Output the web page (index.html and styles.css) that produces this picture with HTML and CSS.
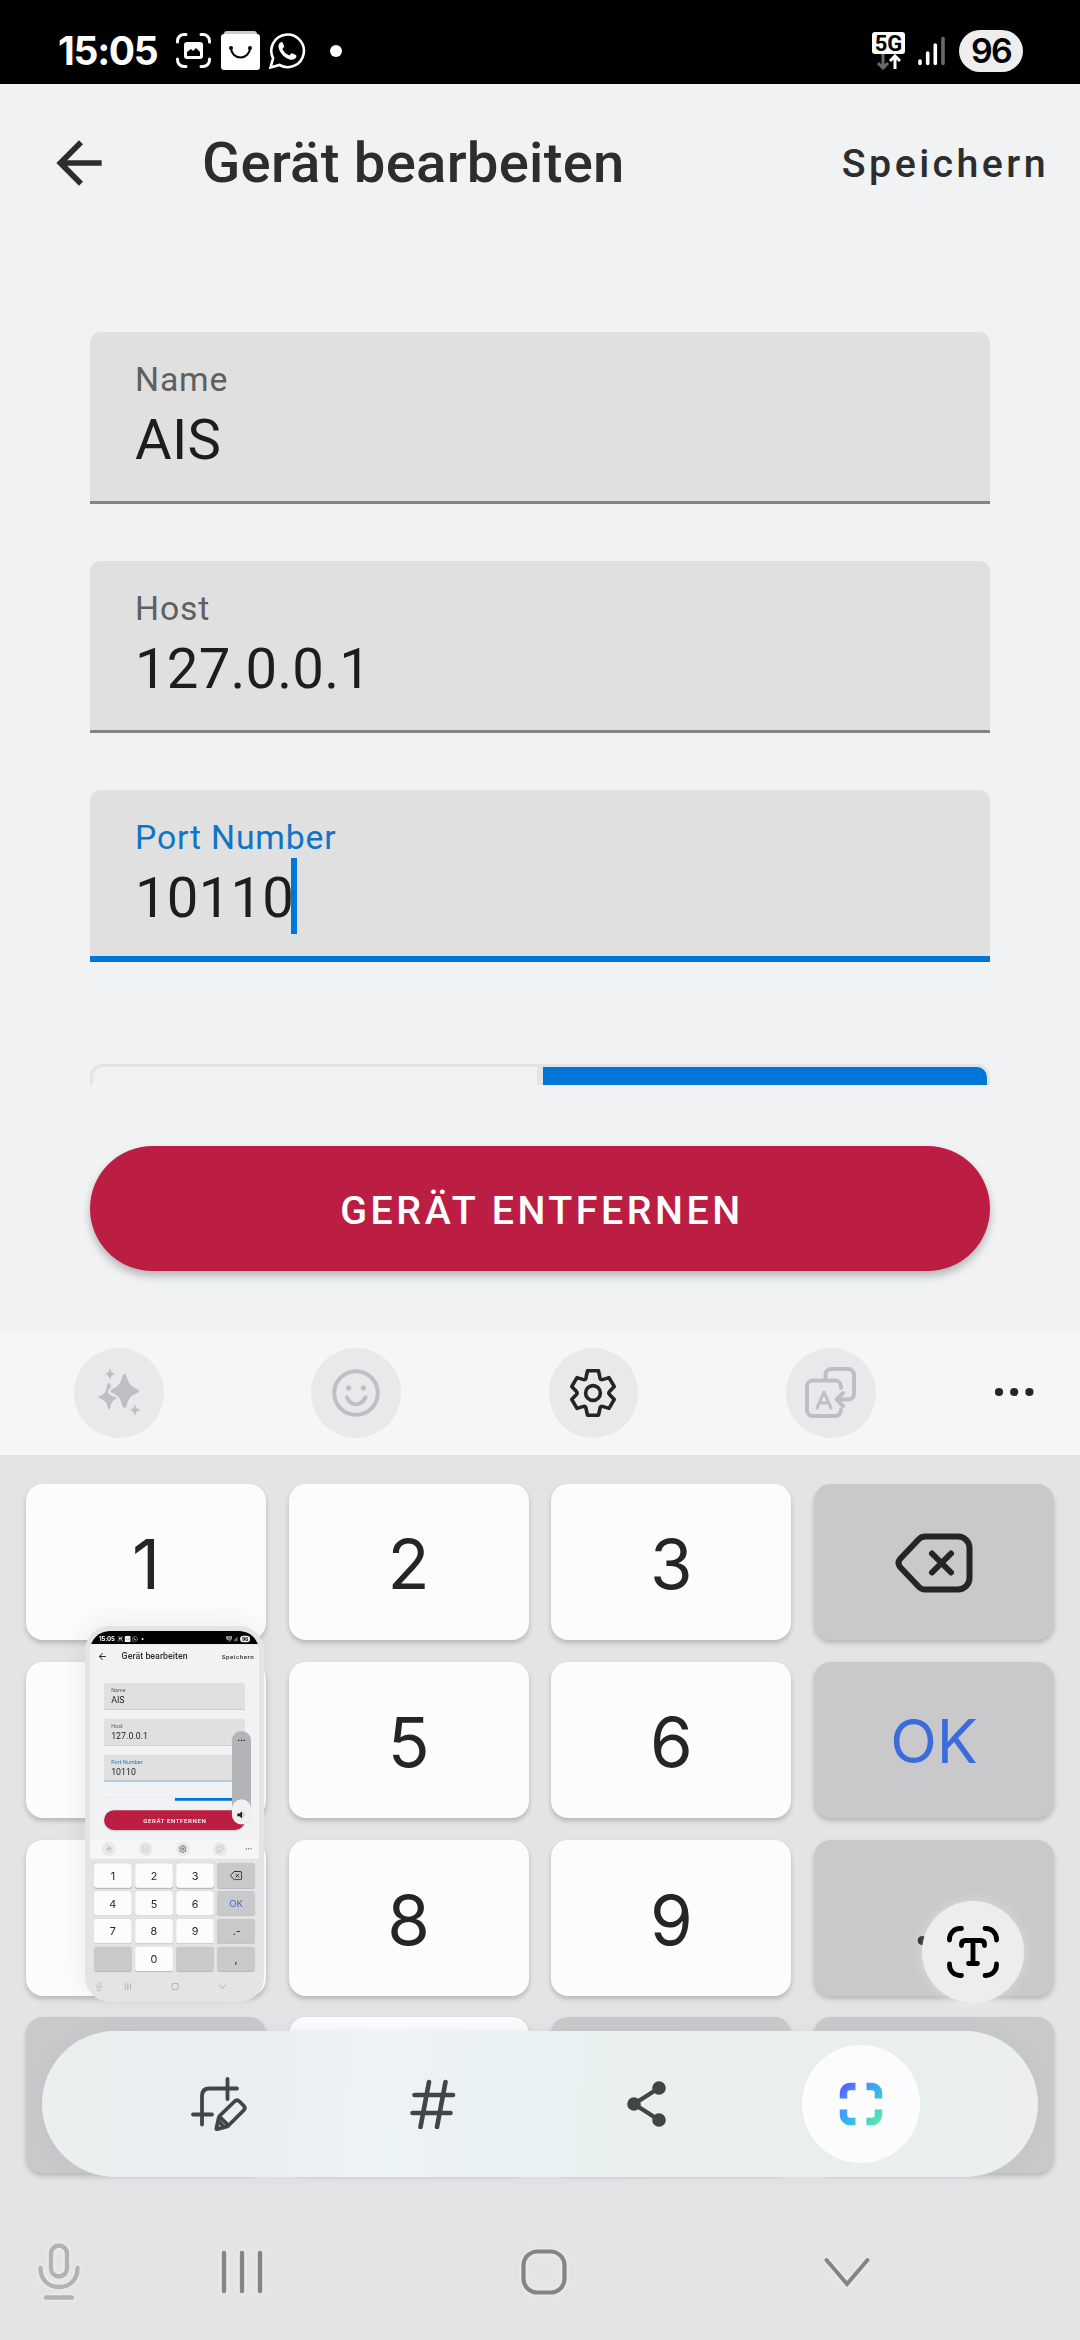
FILE: index.html
```html
<!DOCTYPE html>
<html lang="de">
<head>
    <meta charset="UTF-8">
    <meta name="viewport" content="width=device-width, initial-scale=1.0">
    <title>Gerät bearbeiten</title>
    <link rel="stylesheet" href="styles.css">
</head>
<body>
    <div class="screen" id="screen">
        <div class="statusbar">
            <span class="clock">15:05</span>
            <svg class="st-capture" width="35" height="35" viewBox="0 0 35 35">
                <path d="M1.500 9V8a6.500 6.500 0 0 1 6.500-6.500h2M25 1.500h2A6.500 6.500 0 0 1 33.500 8v1M33.500 26v1a6.500 6.500 0 0 1-6.500 6.500h-2M10 33.500H8A6.500 6.500 0 0 1 1.500 27v-1" fill="none" stroke="#fff" stroke-width="3" stroke-linecap="round"/>
                <rect x="8" y="9" width="19" height="17" rx="3" fill="#fff"/>
                <path d="M11 23v-4l4-3 2 2 3-3 4 4v4z" fill="#000"/>
            </svg>
            <svg class="st-bag" width="39" height="39" viewBox="0 0 39 39">
                <path d="M3 3a3 3 0 0 1 3-3h27a3 3 0 0 1 3 3v3H3z" fill="#ccc"/>
                <rect y="3" width="39" height="36" rx="3" fill="#fff"/>
                <path d="M10 17a9.500 9.500 0 0 0 19 0" fill="none" stroke="#000" stroke-width="2"/>
                <circle cx="10" cy="17" r="2" fill="#000"/>
                <circle cx="29" cy="17" r="2" fill="#000"/>
            </svg>
            <svg class="st-whatsapp" width="37" height="37" viewBox="0 0 37 37">
                <path d="M1.500 35.500l2.600-9.200A16.300 16.300 0 1 1 10.500 33z" fill="none" stroke="#fff" stroke-width="2.600"/>
                <path d="M12.500 10c-2 .6-3.300 2.500-3 5 .8 6 6.500 11.500 12 12.700 3 .6 5.500-1 5.900-3.200.1-.8 0-1.200-.6-1.500l-3.600-1.700c-.6-.2-1 0-1.300.4l-1.500 1.800c-3.300-1.300-5.600-3.500-7-6.500l1.500-2c.3-.4.3-.7.1-1.200l-1.500-3.400c-.2-.5-.5-.5-1-.4z" fill="#fff"/>
            </svg>
            <span class="st-dot"></span>
            <div class="st-right">
                <div class="net">
                    <span class="net-label">5G</span>
                    <svg width="26" height="16" viewBox="0 0 26 16" fill="none" stroke-width="3">
                        <path d="M7 0v14M2 9l5 5 5-5" stroke="#6a6a6a"/>
                        <path d="M19 15V2M14 7l5-5 5 5" stroke="#fff"/>
                    </svg>
                </div>
                <svg class="signal" width="27" height="30" viewBox="0 0 27 30" fill="none" stroke-width="3.600" stroke-linecap="round">
                    <path d="M2 25v2.500M9.700 17v10.500M17.300 9v18.500" stroke="#fff"/>
                    <path d="M25 2.500v25" stroke="#6a6a6a"/>
                </svg>
                <span class="battery">96</span>
            </div>
        </div>

        <div class="app">
            <div class="header">
                <svg class="back" width="68" height="68" viewBox="0 0 24 24">
                    <path d="M20 11H7.830l5.590-5.590L12 4l-8 8 8 8 1.410-1.410L7.830 13H20v-2z" fill="#2d2d2d"/>
                </svg>
                <h1>Gerät bearbeiten</h1>
                <span class="save">Speichern</span>
            </div>

            <div class="form">
                <div class="field">
                    <div class="label">Name</div>
                    <div class="value">AIS</div>
                </div>
                <div class="field">
                    <div class="label">Host</div>
                    <div class="value">127.0.0.1</div>
                </div>
                <div class="field active">
                    <div class="label">Port Number</div>
                    <div class="value">10110<span class="caret"></span></div>
                </div>
                <div class="toggle">
                    <div class="toggle-off"></div>
                    <div class="toggle-on"></div>
                </div>
            </div>

            <div class="remove">GERÄT ENTFERNEN</div>
        </div>

        <div class="tools">
            <div class="tool">
                <svg width="44" height="50" viewBox="0 0 44 50" fill="#bfbfc3">
                    <path d="M27.500 6c1.200 0 1.600 1 2.200 2.700 1.800 5.800 2.800 9 11 12.600 1.800.8 1.800 2.600 0 3.400-8 3.200-9.300 6.500-11 12.600-.6 1.800-1 2.700-2.200 2.700s-1.600-1-2.200-2.700c-1.700-6-3-9.400-10.300-12.600-1.800-.8-1.800-2.600 0-3.400C22.500 18 23.500 14.500 25.300 8.700 25.900 7 26.300 6 27.500 6z"/>
                    <path d="M12 15c.8 0 1.200.8 1.600 2l.6 2c-3.700 2-4 6.600-.7 8.300l5.500 2.200c.8.300.8 1 0 1.300-4 1.700-4.600 4.500-5.600 8.500-.7 2.700-2 2.700-2.700 0-1-4-2-7-8.200-9-1.300-.5-1.300-1.500 0-2 5.800-2.300 6.500-5.500 7.800-11.300.4-1.400.9-2 1.700-2z"/>
                    <path d="M13 0c1 4 1.700 4.800 5 6-3.300 1.200-4 2-5 6-1-4-1.700-4.800-5-6 3.300-1.200 4-2 5-6zM38 36c1 4 1.700 4.800 5.500 6-3.800 1.200-4.500 2-5.500 6-1-4-1.700-4.800-5-6 3.300-1.200 4-2 5-6z"/>
                </svg>
            </div>
            <div class="tool">
                <svg width="48" height="48" viewBox="0 0 48 48" fill="none" stroke="#bfbfc3" stroke-width="4">
                    <circle cx="24" cy="24" r="21.800"/>
                    <path d="M15 28.500c4 9 14 9 18.500 0" stroke-linecap="round"/>
                    <circle cx="16.500" cy="19" r="2.600" fill="#bfbfc3" stroke="none"/>
                    <circle cx="31.500" cy="19" r="2.600" fill="#bfbfc3" stroke="none"/>
                </svg>
            </div>
            <div class="tool">
                <svg width="48" height="48" viewBox="0 0 48 48" fill="none" stroke="#252528" stroke-width="3.600" stroke-linejoin="round">
                    <path d="M18.500 1.800h11l1.600 7.400c.3 1.200 1.200 1.700 2.300 1.400l6.600-2 5.300 9-4.800 5c-.8.900-.8 1.900 0 2.800l4.800 5-5.300 9-6.600-2c-1.100-.3-2 .2-2.300 1.400l-1.600 7.400h-11l-1.600-7.400c-.3-1.200-1.200-1.700-2.300-1.400l-6.600 2-5.300-9 4.800-5c.8-.9.8-1.900 0-2.800l-4.800-5 5.300-9 6.600 2c1.100.3 2-.2 2.300-1.400z"/>
                    <circle cx="24" cy="24" r="7.400"/>
                </svg>
            </div>
            <div class="tool">
                <svg width="52" height="52" viewBox="0 0 52 52" fill="none" stroke="#bfbfc3" stroke-width="4" stroke-linecap="round" stroke-linejoin="round">
                    <path d="M20.500 13V8a6 6 0 0 1 6-6H43a6 6 0 0 1 6 6v18.500a6 6 0 0 1-6 6h-9M38 26l-6.500 6.500L38 39"/>
                    <path d="M36 21v-1.500a6 6 0 0 0-6-6H8a6 6 0 0 0-6 6V43a6 6 0 0 0 6 6h22a6 6 0 0 0 6-6v-.500"/>
                    <path d="M12 41l7-16 7 16M14.500 36h9" stroke-width="3"/>
                </svg>
            </div>
            <svg class="more" width="40" height="10" viewBox="0 0 40 10" fill="#252528">
                <circle cx="5" cy="5" r="4.100"/>
                <circle cx="20.200" cy="5" r="4.100"/>
                <circle cx="35.400" cy="5" r="4.100"/>
            </svg>
        </div>

        <div class="keyboard">
            <div class="keys">
                <div class="key">1</div>
                <div class="key">2</div>
                <div class="key">3</div>
                <div class="key dark">
                    <svg class="del" width="78" height="60" viewBox="0 0 78 60" fill="none" stroke="#252528" stroke-width="6" stroke-linecap="round" stroke-linejoin="round">
                        <path d="M30 3.500h33A11.500 11.500 0 0 1 74.500 15v30A11.500 11.500 0 0 1 63 56.500H30q-3.500 0-6-2.500L5.500 34.500q-4-4.500 0-9L24 6q2.500-2.500 6-2.500z"/>
                        <path d="M37 20.500l19 19M56 20.500l-19 19"/>
                    </svg>
                </div>
                <div class="key"><span class="covered">4</span></div>
                <div class="key">5</div>
                <div class="key">6</div>
                <div class="key dark ok">OK</div>
                <div class="key"><span class="covered">7</span></div>
                <div class="key">8</div>
                <div class="key">9</div>
                <div class="key dark punct">.-</div>
                <div class="key dark"></div>
                <div class="key"><span class="covered">0</span></div>
                <div class="key dark"></div>
                <div class="key dark"><span class="covered">,</span></div>
            </div>
            <div class="nav">
                <svg class="nav-mic" width="42" height="58" viewBox="0 0 42 58" fill="none" stroke="#b2b2b4" stroke-width="4.400" stroke-linecap="round">
                    <rect x="13" y="2.500" width="16" height="31" rx="8"/>
                    <path d="M2.500 25c0 12 8 19 18.500 19s18.500-7 18.500-19M8 54.500h26"/>
                </svg>
                <svg class="nav-recents" width="42" height="44" viewBox="0 0 42 44" stroke="#848486" stroke-width="4.400" stroke-linecap="round">
                    <path d="M3 3v38M21 3v38M39 3v38"/>
                </svg>
                <svg class="nav-home" width="46" height="46" viewBox="0 0 46 46" fill="none" stroke="#848486" stroke-width="4.200">
                    <rect x="2.500" y="2.500" width="41" height="41" rx="14"/>
                </svg>
                <svg class="nav-down" width="46" height="30" viewBox="0 0 46 30" fill="none" stroke="#848486" stroke-width="4" stroke-linecap="round">
                    <path d="M2.500 3L23 27 43.500 3"/>
                </svg>
            </div>
        </div>
    </div>

    <!-- preview of the captured screen, filled by script.js -->
    <div class="preview">
        <div class="preview-inner">
            <div class="preview-page" id="preview">
                <div class="volume">
                    <svg width="48" height="12" viewBox="0 0 48 12" fill="#222"><circle cx="6" cy="6" r="5"/><circle cx="24" cy="6" r="5"/><circle cx="42" cy="6" r="5"/></svg>
                    <div class="volume-knob">
                        <svg width="60" height="54" viewBox="0 0 60 54"><path d="M3 18h14L34 4v46L17 36H3z" fill="#222"/><path d="M42 16q10 11 0 22" fill="none" stroke="#999" stroke-width="5"/></svg>
                    </div>
                </div>
            </div>
        </div>
    </div>

    <div class="text-scan">
        <svg width="52" height="52" viewBox="0 0 52 52" fill="none" stroke="#000" stroke-width="4.800" stroke-linecap="round">
            <path d="M2.500 14v-1A10.500 10.500 0 0 1 13 2.500h1.500M38 2.500h1A10.500 10.500 0 0 1 49.500 13v1M49.500 38v1A10.500 10.500 0 0 1 39 49.500h-1M14.500 49.500H13A10.500 10.500 0 0 1 2.500 39v-1"/>
            <path d="M14.500 19.500v-1q0-4 4-4h15q4 0 4 4v1M26 14.500v23M21.500 37.500h9"/>
        </svg>
    </div>

    <div class="actions">
        <div class="action">
            <svg width="56" height="54" viewBox="0 0 56 54" fill="none" stroke="#444" stroke-width="3.800" stroke-linecap="round" stroke-linejoin="round">
                <path d="M46 11.500H18.500q-7.500 0-7.500 7.500v28.500M2 37.500h19M36.500 2v20"/>
                <path d="M43.500 24.500q2.500-2.500 5 0l4 4q2.500 2.500 0 5L38 48q-1 1.200-2.500 1.600l-9.500 2.600q-.8.200-.6-.7l2.300-10.500q.3-1.400 1.300-2.500zM29 40l8.500 8.500M28 44.500l5 5.500"/>
            </svg>
        </div>
        <div class="action">
            <svg width="46" height="50" viewBox="0 0 46 50" fill="none" stroke="#444" stroke-width="4.600" stroke-linecap="round">
                <path d="M4.500 16H43M2.500 34H40.500M19 3l-8.500 45M35.500 3L27 48"/>
            </svg>
        </div>
        <div class="action">
            <svg width="40" height="46" viewBox="0 0 40 46" fill="#444" stroke="#444" stroke-width="4.400">
                <path d="M32 7L7 23l25 16" fill="none"/>
                <circle cx="32" cy="7" r="4.600"/>
                <circle cx="7" cy="23" r="4.600"/>
                <circle cx="32" cy="39" r="4.600"/>
            </svg>
        </div>
        <div class="action selected">
            <svg width="44" height="44" viewBox="0 0 44 44" fill="none" stroke-width="7.500">
                <defs>
                    <linearGradient id="scan" gradientUnits="userSpaceOnUse" x1="2" y1="2" x2="42" y2="42">
                        <stop offset="0" stop-color="#5b55f0"/>
                        <stop offset=".25" stop-color="#4b8bff"/>
                        <stop offset=".55" stop-color="#35b4f0"/>
                        <stop offset="1" stop-color="#5bf0a0"/>
                    </linearGradient>
                </defs>
                <path d="M4.500 16.500V11a6.500 6.500 0 0 1 6.500-6.500h5.500M27.500 4.500H33a6.500 6.500 0 0 1 6.500 6.500v5.500M39.500 27.500V33a6.500 6.500 0 0 1-6.500 6.500h-5.500M16.500 39.500H11A6.500 6.500 0 0 1 4.500 33v-5.500" stroke="url(#scan)"/>
            </svg>
        </div>
    </div>

    <script src="script.js"></script>
</body>
</html>
```

FILE: styles.css
```css
* {
    box-sizing: border-box;
}
body {
    position: relative;
    margin: 0;
    width: 1080px;
    height: 2340px;
    overflow: hidden;
    font-family: Roboto, "Noto Sans", sans-serif;
    background-color: #e4e4e6;
}
svg {
    display: block;
    flex: none;
}
.screen {
    display: flex;
    flex-direction: column;
    width: 1080px;
    height: 2340px;
    background-color: #e4e4e6;
}

/* status bar */
.statusbar {
    display: flex;
    align-items: center;
    height: 84px;
    padding: 17px 57px 0 58px;
    background-color: #000;
    color: #fff;
}
.clock {
    width: 118px;
    font-family: Inter, sans-serif;
    font-size: 39px;
    font-weight: 700;
    line-height: 44px;
    letter-spacing: -1.3px;
}
.st-bag {
    margin-left: 10px;
}
.st-whatsapp {
    margin-left: 9px;
}
.st-dot {
    width: 12px;
    height: 12px;
    margin-left: 24px;
    border-radius: 50%;
    background-color: #fff;
}
.st-right {
    display: flex;
    align-items: center;
    margin-left: auto;
}
.net {
    display: flex;
    flex-direction: column;
    align-items: center;
    width: 33px;
    height: 38px;
}
.net-label {
    width: 33px;
    height: 22px;
    border-radius: 3px;
    background-color: #fff;
    color: #000;
    font-size: 22px;
    font-weight: 700;
    line-height: 23px;
    text-align: center;
}
.signal {
    margin-left: 13px;
}
.battery {
    width: 64px;
    height: 42px;
    margin-left: 14px;
    border-radius: 21px;
    background-color: #eee;
    color: #000;
    font-family: Inter, sans-serif;
    font-size: 34px;
    font-weight: 600;
    line-height: 41px;
    letter-spacing: -1.8px;
    text-align: center;
}

/* app */
.app {
    display: flex;
    flex-direction: column;
    height: 1248px;
    background-color: #f0f2f4;
}
.header {
    display: flex;
    align-items: center;
    height: 158px;
    padding: 0 31px 0 45px;
    color: #2d2d2d;
}
.header h1 {
    flex: 1;
    margin: 0 0 0 89px;
    font-size: 56.25px;
    font-weight: 500;
    line-height: 66px;
    letter-spacing: 0.25px;
}
.save {
    font-size: 39.4px;
    font-weight: 500;
    letter-spacing: 3.4px;
}
.form {
    display: flex;
    flex-direction: column;
    gap: 57px;
    height: 843px;
    padding: 90px 90px 0;
    overflow: hidden;
}
.field {
    flex: none;
    height: 172px;
    padding: 28px 45px 0;
    border-bottom: 3px solid #848484;
    border-radius: 11px 11px 0 0;
    background-color: #e0e0e0;
}
.label {
    height: 40px;
    color: #5f5f5f;
    font-size: 33.75px;
    line-height: 40px;
    letter-spacing: 0.8px;
}
.value {
    display: flex;
    height: 76px;
    color: #1d1d1d;
    font-size: 56.25px;
    line-height: 81px;
    letter-spacing: 0.2px;
}
.field.active {
    border-bottom: 6px solid #0077d8;
}
.active .label {
    color: #0f74c8;
}
.caret {
    width: 6px;
    height: 76px;
    margin-left: -3px;
    background-color: #0077d8;
}
.toggle {
    display: flex;
    flex: none;
    gap: 6px;
    height: 120px;
    margin-top: 45px;
    padding: 3px;
    border-radius: 12px;
    background-color: #e2e4e6;
}
.toggle-off {
    width: 444px;
    border-radius: 10px 0 0 10px;
    background-color: #f0f2f4;
}
.toggle-on {
    width: 444px;
    border-radius: 0 10px 10px 0;
    background-color: #0077d8;
}
.remove {
    height: 125px;
    margin: 61px 90px 0;
    padding-left: 4px;
    border-radius: 63px;
    background-color: #bb1e42;
    box-shadow: 0 5px 9px rgba(0, 0, 0, 0.25);
    color: #fff;
    font-size: 39.4px;
    font-weight: 500;
    line-height: 129px;
    letter-spacing: 3.5px;
    text-align: center;
}

/* keyboard toolbar */
.tools {
    display: flex;
    align-items: center;
    height: 123px;
    padding: 0 46px 0 74px;
    background-color: #f6f6f8;
}
.tool {
    display: flex;
    align-items: center;
    justify-content: center;
    width: 90px;
    height: 90px;
    margin: 0 147.5px 1px 0;
    border-radius: 50%;
    background-color: #e9e9eb;
}
.more {
    margin: 0 0 3px -29px;
}

/* keyboard */
.keyboard {
    flex: 1;
    padding: 29px 26px 0;
}
.keys {
    display: grid;
    grid-template-columns: repeat(4, 240px);
    grid-auto-rows: 156px;
    justify-content: space-between;
    row-gap: 21.8px;
}
.key {
    display: flex;
    align-items: center;
    justify-content: center;
    padding-top: 4px;
    border-radius: 17px;
    background-color: #fcfcfe;
    box-shadow: 0 3px 5px rgba(0, 0, 0, 0.2);
    color: #252528;
    font-family: Inter, sans-serif;
    font-size: 69px;
}
.key.dark {
    background-color: #c9c9cb;
}
.key.ok {
    padding-top: 2px;
    color: #3a6cdc;
    font-size: 61px;
}
.key.punct {
    padding-left: 8px;
}
.del {
    margin-bottom: 3px;
}
.nav {
    display: flex;
    align-items: center;
    height: 64px;
    margin-top: 67px;
    padding-left: 12px;
}
.nav svg {
    filter: drop-shadow(0 0 2px #f4f4f6);
}
.nav-recents {
    margin-left: 141px;
}
.nav-home {
    margin-left: 258px;
}
.nav-down {
    margin-left: 257px;
}

/* keys under the preview and the action bar only show their label in the preview */
.covered {
    display: none;
}
.preview .covered {
    display: inline;
}
.preview .caret {
    display: none;
}

/* preview of the captured screen */
.preview {
    position: absolute;
    left: 85px;
    top: 1626px;
    width: 179px;
    height: 376px;
    padding: 5px;
    border-radius: 25px;
    background-color: #e4e4e6;
    box-shadow: -4px -6px 26px rgba(0, 0, 0, 0.06);
}
.preview-inner {
    width: 169px;
    height: 366px;
    border-radius: 20px;
    overflow: hidden;
}
.preview-page {
    position: relative;
    width: 1080px;
    height: 2340px;
    transform: scale(0.1565);
    transform-origin: 0 0;
}
.volume {
    position: absolute;
    z-index: 1;
    left: 907px;
    top: 639px;
    display: flex;
    flex-direction: column;
    align-items: center;
    justify-content: space-between;
    width: 122px;
    height: 596px;
    padding-top: 54px;
    border-radius: 61px;
    background-color: #b4b4b8;
}
.volume-knob {
    display: flex;
    align-items: center;
    justify-content: center;
    width: 122px;
    height: 160px;
    padding-top: 40px;
    border-radius: 61px;
    background-color: #f0f0f2;
}

/* floating buttons */
.text-scan {
    position: absolute;
    left: 922px;
    top: 1901px;
    display: flex;
    align-items: center;
    justify-content: center;
    width: 102px;
    height: 102px;
    border-radius: 50%;
    background-color: #ededed;
    box-shadow: 0 0 14px rgba(255, 255, 255, 0.35);
}
.actions {
    position: absolute;
    left: 42px;
    top: 2031px;
    display: flex;
    align-items: center;
    justify-content: space-between;
    width: 996px;
    height: 146px;
    padding: 0 118px;
    border-radius: 73px;
    background: linear-gradient(95deg, #ebefef 0%, #e8eef1 20%, #ecf2f5 34%, #eaf1f2 50%, #e8efec 68%, #e9efee 90%, #edefef 100%);
    box-shadow: 0 0 16px rgba(160, 170, 185, 0.15);
}
.action {
    display: flex;
    align-items: center;
    justify-content: center;
    width: 118px;
    height: 118px;
    border-radius: 50%;
}
.action.selected {
    background-color: #fcfcfe;
}
```

FILE: script.js
```js
// fill the preview with a copy of the screen
const screenEl = document.getElementById('screen');
const copy = screenEl.cloneNode(true);
copy.removeAttribute('id');
document.getElementById('preview').appendChild(copy);
```
